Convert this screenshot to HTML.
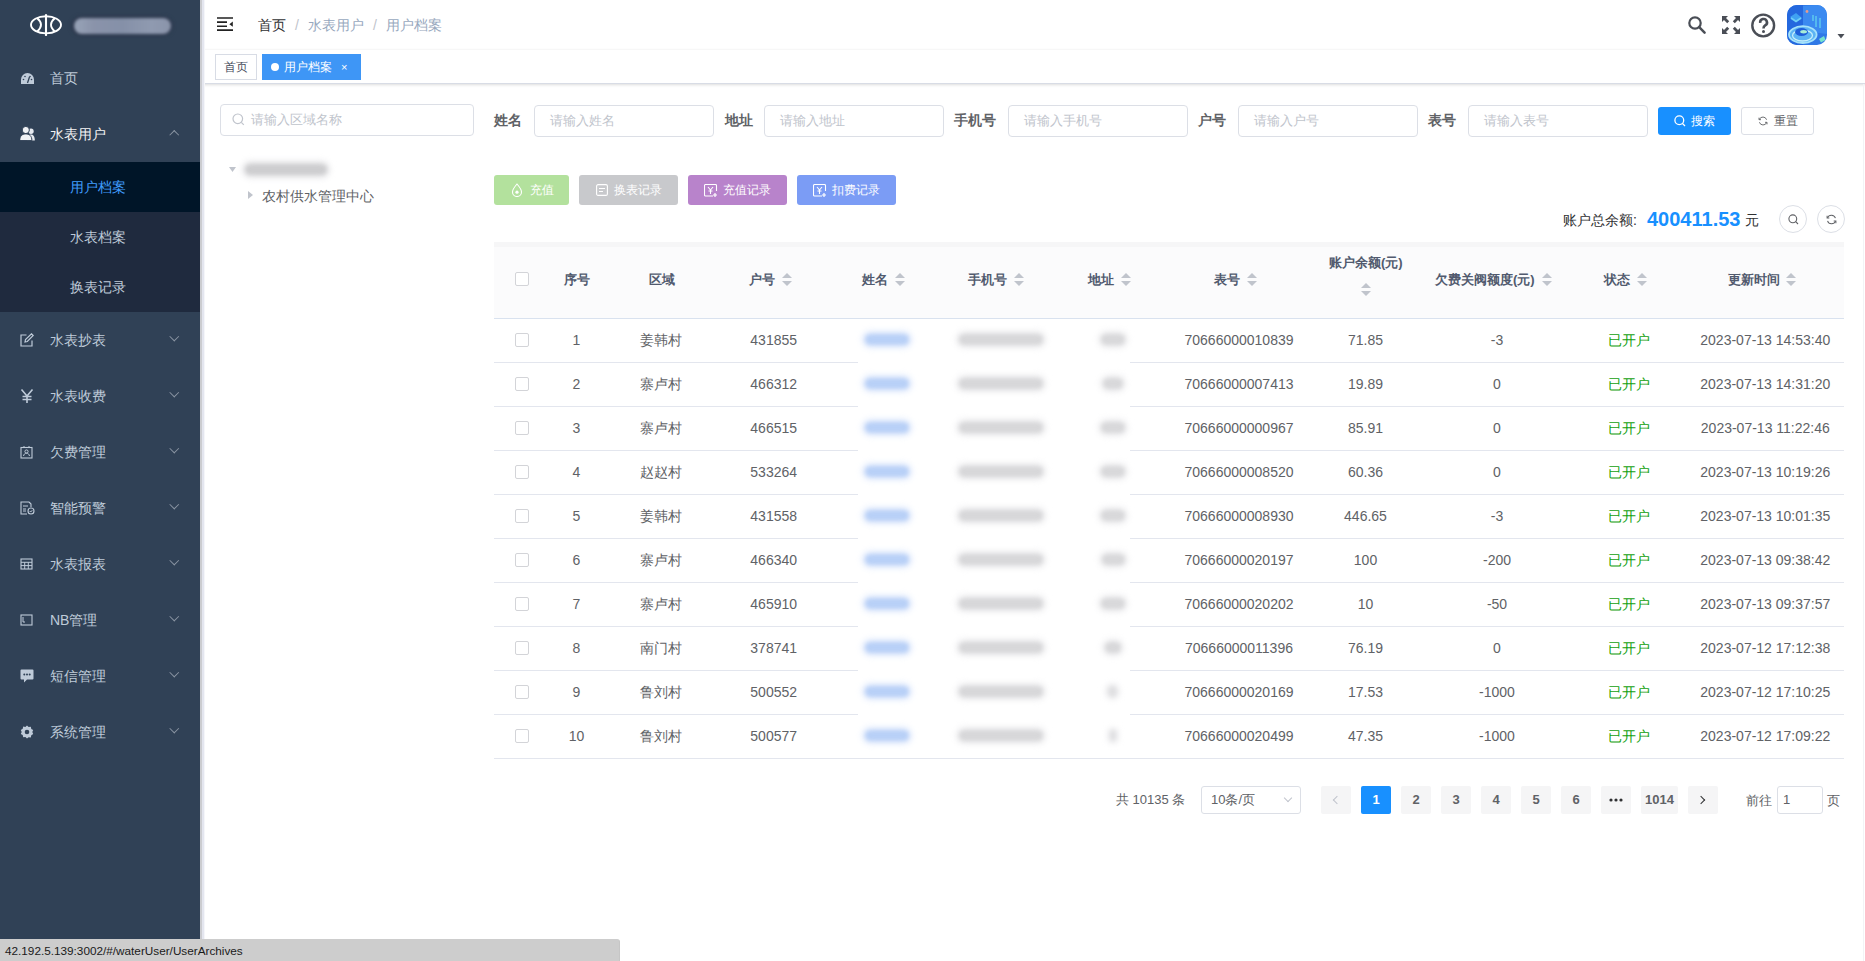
<!DOCTYPE html>
<html><head><meta charset="utf-8">
<style>
*{box-sizing:border-box;margin:0;padding:0}
html,body{width:1865px;height:961px;overflow:hidden;background:#fff;font-family:"Liberation Sans",sans-serif;color:#606266}
.a{position:absolute}
#side{position:absolute;left:0;top:0;width:200px;height:961px;background:#304156;z-index:5}
.mi{position:absolute;left:0;width:200px;height:56px;color:#bfcbd9;font-size:14px}
.mi svg{position:absolute;left:20px;top:21px}
.mi .t{position:absolute;left:50px;top:0;line-height:56px;white-space:nowrap}
.mi .ar{position:absolute;left:171px;top:21px;width:6.5px;height:6.5px;border-right:1px solid #8b95a3;border-bottom:1px solid #8b95a3;transform:rotate(45deg)}
.mi .ar.up{top:26px;transform:rotate(-135deg)}
.sub{position:absolute;left:0;width:200px;height:50px;background:#1f2a3e;color:#bfcbd9;font-size:14px;line-height:50px;padding-left:70px}
#nav{position:absolute;left:200px;top:0;width:1665px;height:50px;background:#fff;box-shadow:0 1px 4px rgba(0,21,41,.08)}
#tags{position:absolute;left:200px;top:50px;width:1665px;height:34px;background:#fff;border-bottom:1px solid #d8dce5;box-shadow:0 1px 3px 0 rgba(0,0,0,.12),0 0 3px 0 rgba(0,0,0,.04)}
.tag{position:absolute;top:4px;height:26px;line-height:24px;font-size:12px;border:1px solid #d8dce5;color:#495060;padding:0 8px;background:#fff;white-space:nowrap}
.inp{position:absolute;height:32px;border:1px solid #dcdfe6;border-radius:4px;background:#fff;font-size:13px;color:#c0c4cc;line-height:30px;padding-left:15px;white-space:nowrap}
.lbl{position:absolute;font-size:14px;font-weight:bold;color:#606266;line-height:32px;white-space:nowrap}
.btn{position:absolute;height:30px;border-radius:3px;font-size:12px;color:#fff;line-height:30px;white-space:nowrap}
.th{position:absolute;font-size:13px;font-weight:bold;color:#515a6e;white-space:nowrap;line-height:16px}
.row{position:absolute;left:494px;width:1350px;height:44px;border-bottom:1px solid #e3e6ee}
.c{position:absolute;top:0;line-height:43px;font-size:14px;color:#606266;text-align:center;white-space:nowrap}
.cb{position:absolute;width:14px;height:14px;border:1px solid #d3d4d8;border-radius:2px;background:#fff}
.sort{position:absolute;width:10px;height:14px}
.sort:before{content:"";position:absolute;left:0;top:0;border:5px solid transparent;border-bottom-color:#c0c4cc;border-top-width:0}
.sort:after{content:"";position:absolute;left:0;top:8px;border:5px solid transparent;border-top-color:#c0c4cc;border-bottom-width:0}
.pg{position:absolute;top:786px;height:28px;min-width:30px;background:#f5f5f6;border-radius:2px;font-size:13px;font-weight:bold;color:#606266;line-height:28px;text-align:center;padding:0 4px}
.blur{position:absolute;border-radius:8px;filter:blur(2px)}
</style></head><body>
<div id="side">
<svg class="a" style="left:25px;top:8px" width="45" height="34" viewBox="0 0 45 34"><ellipse cx="21" cy="16.8" rx="15" ry="8.6" fill="none" stroke="#fff" stroke-width="1.9"/><path d="M12 10 Q20 16.8 12 23.6" fill="none" stroke="#fff" stroke-width="1.9"/><path d="M30 10 Q22 16.8 30 23.6" fill="none" stroke="#fff" stroke-width="1.9"/><line x1="21" y1="6.2" x2="21" y2="27.9" stroke="#fff" stroke-width="2.1"/></svg>
<div class="blur" style="left:72px;top:17px;width:100px;height:18px;border-radius:9px;background:#2b3449;filter:blur(2px)"></div><div class="blur" style="left:74px;top:18px;width:97px;height:16px;border-radius:8px;background:linear-gradient(90deg,#98a4b8 0%,#8a93aa 20%,#8590a8 50%,#8f9ab0 80%,#8a94aa 100%);filter:blur(1.8px)"></div>
<div class="mi" style="top:50px"><svg width="15" height="14" viewBox="0 0 15 14" style="top:22px"><path d="M7.5 1A6.5 6.5 0 0 0 1 7.5V12h13V7.5A6.5 6.5 0 0 0 7.5 1z" fill="#bfcbd9"/><path d="M7.5 11L9.5 5" stroke="#304156" stroke-width="1.3"/><circle cx="3.5" cy="7.5" r=".8" fill="#304156"/><circle cx="5" cy="4.5" r=".8" fill="#304156"/><circle cx="10" cy="4.5" r=".8" fill="#304156"/><circle cx="11.5" cy="7.5" r=".8" fill="#304156"/></svg><span class="t">首页</span></div>
<div class="mi" style="top:106px;color:#f4f4f5"><svg width="15" height="15" viewBox="0 0 15 15" style="left:20px;top:20px"><circle cx="11" cy="5.3" r="2.7" fill="#e6eaf0"/><path d="M7 14.5C7 10.5 8.8 8.6 11 8.6s3.8 1.9 3.8 5.9z" fill="#e6eaf0"/><circle cx="5.8" cy="4" r="3.6" fill="#f0f2f5" stroke="#304156" stroke-width="1"/><path d="M-.3 14.6C-.3 10 2.2 7.9 5.8 7.9s6.1 2.1 6.1 6.7z" fill="#f0f2f5" stroke="#304156" stroke-width="1"/></svg><span class="t">水表用户</span><span class="ar up"></span></div>
<div class="sub" style="top:162px;background:#001528;color:#409eff">用户档案</div>
<div class="sub" style="top:212px">水表档案</div>
<div class="sub" style="top:262px">换表记录</div>
<div class="mi" style="top:312px"><svg width="14" height="14" viewBox="0 0 14 14" style="top:21px"><path d="M12 7.5V13H1V2h5.5" fill="none" stroke="#bfcbd9" stroke-width="1.2"/><path d="M5 9l.5-2.5L11.5.8 13.2 2.5 7.3 8.5z" fill="none" stroke="#bfcbd9" stroke-width="1.2"/></svg><span class="t">水表抄表</span><span class="ar"></span></div>
<div class="mi" style="top:368px"><svg width="14" height="14" viewBox="0 0 14 14" style="top:21px"><path d="M1.5 0.5L7 7L12.5 0.5M7 7V14M2.5 7.5H11.5M2.5 10.5H11.5" fill="none" stroke="#bfcbd9" stroke-width="1.6"/></svg><span class="t">水表收费</span><span class="ar"></span></div>
<div class="mi" style="top:424px"><svg width="13" height="13" viewBox="0 0 13 13" style="top:22px"><rect x="1" y="1.5" width="11" height="10.5" fill="none" stroke="#bfcbd9" stroke-width="1.1"/><circle cx="6.5" cy="5.5" r="1.6" fill="none" stroke="#bfcbd9" stroke-width="1"/><path d="M3.5 10c.5-2 1.5-2.8 3-2.8s2.5.8 3 2.8" fill="none" stroke="#bfcbd9" stroke-width="1"/><path d="M4 0v2M9 0v2" stroke="#bfcbd9"/></svg><span class="t">欠费管理</span><span class="ar"></span></div>
<div class="mi" style="top:480px"><svg width="15" height="14" viewBox="0 0 15 14" style="top:21px"><path d="M9 1H1v12h6M9 1l2 2v3" fill="none" stroke="#bfcbd9" stroke-width="1.1"/><path d="M3 5h5M3 8h3M3 10h3" stroke="#bfcbd9" stroke-width="1"/><circle cx="11" cy="10" r="3" fill="none" stroke="#bfcbd9" stroke-width="1.1"/><path d="M9.7 10l1 1 1.6-1.8" fill="none" stroke="#bfcbd9" stroke-width="1"/></svg><span class="t">智能预警</span><span class="ar"></span></div>
<div class="mi" style="top:536px"><svg width="13" height="12" viewBox="0 0 13 12" style="top:22px"><rect x="1" y="1" width="11" height="10" fill="none" stroke="#bfcbd9" stroke-width="1.1"/><path d="M1 4.3h11M1 7.6h11M4.7 4.3V11M8.3 4.3V11" stroke="#bfcbd9" stroke-width="1"/></svg><span class="t">水表报表</span><span class="ar"></span></div>
<div class="mi" style="top:592px"><svg width="13" height="12" viewBox="0 0 13 12" style="top:22px"><rect x="1" y="1" width="11" height="10" fill="none" stroke="#bfcbd9" stroke-width="1.1"/><path d="M3 3v5h2" fill="none" stroke="#bfcbd9" stroke-width="1"/></svg><span class="t">NB管理</span><span class="ar"></span></div>
<div class="mi" style="top:648px"><svg width="14" height="14" viewBox="0 0 14 14" style="top:21px"><path d="M1.5 0.5h11a1 1 0 0 1 1 1v8a1 1 0 0 1-1 1H7l-3 3v-3H1.5a1 1 0 0 1-1-1v-8a1 1 0 0 1 1-1z" fill="#bfcbd9"/><circle cx="4.3" cy="5.5" r="1" fill="#304156"/><circle cx="7" cy="5.5" r="1" fill="#304156"/><circle cx="9.7" cy="5.5" r="1" fill="#304156"/></svg><span class="t">短信管理</span><span class="ar"></span></div>
<div class="mi" style="top:704px"><svg width="14" height="14" viewBox="0 0 14 14" style="top:21px"><path d="M7 .5l1.6 1.5 2.2-.3.5 2.2 1.9 1.2-.9 2 .9 2-1.9 1.2-.5 2.2-2.2-.3L7 13.5l-1.6-1.5-2.2.3-.5-2.2L.8 9l.9-2-.9-2 1.9-1.2.5-2.2 2.2.3z" fill="#bfcbd9"/><circle cx="7" cy="7" r="2.3" fill="#304156"/></svg><span class="t">系统管理</span><span class="ar"></span></div>
</div>
<div class="a" style="left:200px;top:0;width:2px;height:961px;background:#cbccd0;z-index:6"></div><div class="a" style="left:202px;top:0;width:2px;height:961px;background:#e4e6ef;z-index:6"></div><div class="a" style="left:204px;top:0;width:1px;height:961px;background:#f5f6fa;z-index:6"></div>
<div id="nav">
<svg class="a" style="left:17px;top:17px" width="16" height="15" viewBox="0 0 16 15"><path d="M0 1h16M0 5.1h10M0 9.2h10M0 13.1h16" stroke="#222" stroke-width="1.6"/><path d="M15.8 4.5v5.3l-3.4-2.65z" fill="#222"/></svg>
<div class="a" style="left:58px;top:16px;font-size:14px;line-height:18px;white-space:nowrap"><span style="color:#303133">首页</span><span style="color:#c0c4cc;margin:0 9px">/</span><span style="color:#97a8be">水表用户</span><span style="color:#c0c4cc;margin:0 9px">/</span><span style="color:#97a8be">用户档案</span></div>
<svg class="a" style="left:1488px;top:16px" width="19" height="19" viewBox="0 0 19 19"><circle cx="7" cy="7" r="5.7" fill="none" stroke="#4a4e56" stroke-width="2.2"/><path d="M11.2 11.2L16.6 16.6" stroke="#4a4e56" stroke-width="2.5" stroke-linecap="round"/></svg>
<svg class="a" style="left:1522px;top:16px" width="18" height="18" viewBox="0 0 18 18"><g fill="#4a4e56"><path d="M0 0h6l-2 2 3.2 3.2-2 2L2 4 0 6z"/><path d="M18 0h-6l2 2-3.2 3.2 2 2L16 4l2 2z"/><path d="M0 18h6l-2-2 3.2-3.2-2-2L2 14l-2-2z"/><path d="M18 18h-6l2-2-3.2-3.2 2-2L16 14l2-2z"/></g></svg>
<svg class="a" style="left:1550px;top:13px" width="26" height="26" viewBox="0 0 26 26"><circle cx="13.2" cy="12.5" r="10.9" fill="none" stroke="#4a4e56" stroke-width="2.4"/><path d="M10.2 9.8A3.4 3.4 0 1 1 15.2 12.4C14 13.2 13.5 13.8 13.5 15.4" fill="none" stroke="#4a4e56" stroke-width="2.6"/><circle cx="13.5" cy="18.6" r="1.5" fill="#4a4e56"/></svg>
<svg class="a" style="left:1587px;top:5px" width="40" height="40" viewBox="0 0 40 40"><defs><clipPath id="avc"><rect width="40" height="40" rx="10"/></clipPath></defs><g clip-path="url(#avc)">
<rect width="40" height="40" fill="#2f78e6"/>
<path d="M0 0h16v40H0z" fill="#2468de"/>
<path d="M16 1l24-2v30L16 26z" fill="#3b8af0"/>
<path d="M3 12l6-4 6 5-6 4z" fill="#3fa2f2"/>
<path d="M4 13l5 3.5 5-3.5" stroke="#6fd0f6" stroke-width="1.8" fill="none"/>
<path d="M29 11v11M33 13v10M26 10v6" stroke="#63d3ee" stroke-width="1.3"/>
<circle cx="20" cy="6.5" r="1.4" fill="#e89a8a"/>
<ellipse cx="15.8" cy="29.6" rx="13.8" ry="8.4" fill="#5cb4f4" stroke="#a5e2fa" stroke-width="1.8"/>
<ellipse cx="15.5" cy="30.5" rx="10" ry="5.5" fill="none" stroke="#c6effb" stroke-width="1.3"/>
<ellipse cx="14.5" cy="27" rx="6.5" ry="4" fill="#1e5fd8"/>
<ellipse cx="16.6" cy="26.7" rx="3.4" ry="1.7" fill="#a6eed6"/>
<path d="M32 34l5-3 1.5 4-4.5 2.5z" fill="#74e2cc"/>
</g></svg>
<svg class="a" style="left:1637px;top:34px" width="8" height="5" viewBox="0 0 8 5"><path d="M.5 0h7L4 4.5z" fill="#4a4e56"/></svg>
</div>
<div id="tags">
<div class="tag" style="left:15px;top:4px;width:42px;padding:0;text-align:center">首页</div>
<div class="tag" style="left:62px;top:4px;width:99px;background:#3e96f6;border-color:#3e96f6;color:#fff;padding:0"><span class="a" style="left:8px;top:8px;width:8px;height:8px;border-radius:50%;background:#fff"></span><span class="a" style="left:21px;top:0">用户档案</span><span class="a" style="left:78px;top:0;font-size:11px">×</span></div>
</div>
<div id="content">
<div class="inp" style="left:220px;top:104px;width:254px;padding-left:30px"><svg class="a" style="left:11px;top:8px" width="13" height="13" viewBox="0 0 13 13"><circle cx="5.8" cy="5.8" r="4.8" fill="none" stroke="#c0c4cc" stroke-width="1.2"/><path d="M9.3 9.3l2.5 2.5" stroke="#c0c4cc" stroke-width="1.2"/></svg>请输入区域名称</div>
<svg class="a" style="left:229px;top:167px" width="7" height="5" viewBox="0 0 7 5"><path d="M0 0h7L3.5 5z" fill="#c0c4cc"/></svg>
<div class="blur" style="left:245px;top:164px;width:82px;height:11px;background:#cdcdcf;box-shadow:0 0 5px 3px #e6e6e8;filter:blur(2px)"></div>
<svg class="a" style="left:248px;top:191px" width="5" height="8" viewBox="0 0 5 8"><path d="M0 0v8l5-4z" fill="#c0c4cc"/></svg>
<div class="a" style="left:262px;top:187px;font-size:14px;line-height:18px;color:#606266;white-space:nowrap">农村供水管理中心</div>

<div class="lbl" style="left:494px;top:104px">姓名</div>
<div class="inp" style="left:534px;top:105px;width:180px">请输入姓名</div>
<div class="lbl" style="left:725px;top:104px">地址</div>
<div class="inp" style="left:764px;top:105px;width:180px">请输入地址</div>
<div class="lbl" style="left:954px;top:104px">手机号</div>
<div class="inp" style="left:1008px;top:105px;width:180px">请输入手机号</div>
<div class="lbl" style="left:1198px;top:104px">户号</div>
<div class="inp" style="left:1238px;top:105px;width:180px">请输入户号</div>
<div class="lbl" style="left:1428px;top:104px">表号</div>
<div class="inp" style="left:1468px;top:105px;width:180px">请输入表号</div>
<div class="btn" style="left:1658px;top:107px;width:73px;height:28px;line-height:28px;background:#1890ff;padding-left:33px"><svg class="a" style="left:16px;top:8px" width="12" height="12" viewBox="0 0 12 12"><circle cx="5.3" cy="5.3" r="4.4" fill="none" stroke="#fff" stroke-width="1.3"/><path d="M8.5 8.5l2.5 2.5" stroke="#fff" stroke-width="1.3"/></svg>搜索</div>
<div class="btn" style="left:1741px;top:107px;width:73px;height:28px;line-height:26px;background:#fff;border:1px solid #dcdfe6;color:#606266;padding-left:32px"><svg class="a" style="left:16px;top:8px" width="10" height="10" viewBox="0 0 12 12"><path d="M10.3 4.5A4.6 4.6 0 0 0 1.6 4.2M1.7 7.5a4.6 4.6 0 0 0 8.7.3" fill="none" stroke="#606266" stroke-width="1.1"/><path d="M1.2 2v2.4h2.4" fill="none" stroke="#606266" stroke-width="1.1"/><path d="M10.8 10v-2.4H8.4" fill="none" stroke="#606266" stroke-width="1.1"/></svg>重置</div>

<div class="btn" style="left:494px;top:175px;width:75px;background:#b3e19d;padding-left:36px"><svg class="a" style="left:17px;top:8px" width="12" height="14" viewBox="0 0 12 14"><path d="M6 1C3 4.5 1.5 6.8 1.5 9a4.5 4.5 0 0 0 9 0C10.5 6.8 9 4.5 6 1z" fill="none" stroke="#fff" stroke-width="1.1"/><circle cx="6" cy="9.2" r="1.6" fill="#fff"/></svg>充值</div>
<div class="btn" style="left:579px;top:175px;width:99px;background:#c8c9cc;padding-left:35px"><svg class="a" style="left:17px;top:9px" width="12" height="12" viewBox="0 0 12 12"><rect x=".6" y=".6" width="10.8" height="10.8" rx="1.5" fill="none" stroke="#fff" stroke-width="1.1"/><path d="M3 4.5h6M3 7.5h4" stroke="#fff" stroke-width="1.1"/></svg>换表记录</div>
<div class="btn" style="left:688px;top:175px;width:99px;background:#b883cb;padding-left:35px"><svg class="a" style="left:16px;top:9px" width="14" height="13" viewBox="0 0 14 13"><path d="M9 12H1.5a1 1 0 0 1-1-1V1.5a1 1 0 0 1 1-1h10a1 1 0 0 1 1 1V7" fill="none" stroke="#fff" stroke-width="1.1"/><path d="M4 3l2.5 3L9 3M6.5 6v4M4.5 7h4" stroke="#fff" stroke-width="1.1" fill="none"/><path d="M11 9v4M9 11h4" stroke="#fff" stroke-width="1.2"/></svg>充值记录</div>
<div class="btn" style="left:797px;top:175px;width:99px;background:#7b9cf5;padding-left:35px"><svg class="a" style="left:16px;top:9px" width="14" height="13" viewBox="0 0 14 13"><path d="M9 12H1.5a1 1 0 0 1-1-1V1.5a1 1 0 0 1 1-1h10a1 1 0 0 1 1 1V7" fill="none" stroke="#fff" stroke-width="1.1"/><path d="M4 3l2.5 3L9 3M6.5 6v4M4.5 7h4" stroke="#fff" stroke-width="1.1" fill="none"/><path d="M11 9v4M9 11h4" stroke="#fff" stroke-width="1.2"/></svg>扣费记录</div>

<div class="a" style="left:1563px;top:211px;font-size:14px;line-height:18px;color:#303133;white-space:nowrap">账户总余额:</div>
<div class="a" style="left:1647px;top:207px;font-size:20px;font-weight:bold;line-height:24px;color:#1890ff;white-space:nowrap">400411.53</div>
<div class="a" style="left:1745px;top:211px;font-size:14px;line-height:18px;color:#303133">元</div>
<div class="a" style="left:1779px;top:205px;width:28px;height:28px;border:1px solid #dcdfe6;border-radius:50%"><svg class="a" style="left:8px;top:8px" width="11" height="11" viewBox="0 0 11 11"><circle cx="4.8" cy="4.8" r="3.9" fill="none" stroke="#606266" stroke-width="1.1"/><path d="M7.7 7.7l2.3 2.3" stroke="#606266" stroke-width="1.1"/></svg></div>
<div class="a" style="left:1817px;top:205px;width:28px;height:28px;border:1px solid #dcdfe6;border-radius:50%"><svg class="a" style="left:8px;top:8px" width="11" height="11" viewBox="0 0 12 12"><path d="M10.3 4.5A4.6 4.6 0 0 0 1.6 4.2M1.7 7.5a4.6 4.6 0 0 0 8.7.3" fill="none" stroke="#606266" stroke-width="1.1"/><path d="M1.2 2v2.4h2.4" fill="none" stroke="#606266" stroke-width="1.1"/><path d="M10.8 10v-2.4H8.4" fill="none" stroke="#606266" stroke-width="1.1"/></svg></div>
</div>
<div id="table">
<div class="a" style="left:494px;top:242px;width:1350px;height:77px;background:#fbfbfc;border-top:5px solid #f6f6f7;border-bottom:1px solid #d9e2ef"></div>
<div class="cb" style="left:515px;top:272px"></div>
<div class="th" style="left:564px;top:272px">序号</div>
<div class="th" style="left:649px;top:272px">区域</div>
<div class="th" style="left:749px;top:272px">户号</div><span class="sort" style="left:782px;top:273px"></span>
<div class="th" style="left:862px;top:272px">姓名</div><span class="sort" style="left:895px;top:273px"></span>
<div class="th" style="left:968px;top:272px">手机号</div><span class="sort" style="left:1014px;top:273px"></span>
<div class="th" style="left:1088px;top:272px">地址</div><span class="sort" style="left:1121px;top:273px"></span>
<div class="th" style="left:1214px;top:272px">表号</div><span class="sort" style="left:1247px;top:273px"></span>
<div class="th" style="left:1329px;top:255px">账户余额(元)</div>
<span class="sort" style="left:1361px;top:283px"></span>
<div class="th" style="left:1435px;top:272px">欠费关阀额度(元)</div><span class="sort" style="left:1542px;top:273px"></span>
<div class="th" style="left:1604px;top:272px">状态</div><span class="sort" style="left:1637px;top:273px"></span>
<div class="th" style="left:1728px;top:272px">更新时间</div><span class="sort" style="left:1786px;top:273px"></span>
<div class="row" style="top:319px"><div class="cb" style="left:21px;top:14px"></div><div class="c" style="left:-17.5px;width:200px">1</div><div class="c" style="left:67px;width:200px">姜韩村</div><div class="c" style="left:179.70000000000005px;width:200px">431855</div><div class="c" style="left:645px;width:200px">70666000010839</div><div class="c" style="left:771.5px;width:200px">71.85</div><div class="c" style="left:903px;width:200px">-3</div><div class="c" style="left:1035px;width:200px;color:#13a10e">已开户</div><div class="c" style="left:1171.3px;width:200px">2023-07-13 14:53:40</div></div>
<div class="row" style="top:363px"><div class="cb" style="left:21px;top:14px"></div><div class="c" style="left:-17.5px;width:200px">2</div><div class="c" style="left:67px;width:200px">寨卢村</div><div class="c" style="left:179.70000000000005px;width:200px">466312</div><div class="c" style="left:645px;width:200px">70666000007413</div><div class="c" style="left:771.5px;width:200px">19.89</div><div class="c" style="left:903px;width:200px">0</div><div class="c" style="left:1035px;width:200px;color:#13a10e">已开户</div><div class="c" style="left:1171.3px;width:200px">2023-07-13 14:31:20</div></div>
<div class="row" style="top:407px"><div class="cb" style="left:21px;top:14px"></div><div class="c" style="left:-17.5px;width:200px">3</div><div class="c" style="left:67px;width:200px">寨卢村</div><div class="c" style="left:179.70000000000005px;width:200px">466515</div><div class="c" style="left:645px;width:200px">70666000000967</div><div class="c" style="left:771.5px;width:200px">85.91</div><div class="c" style="left:903px;width:200px">0</div><div class="c" style="left:1035px;width:200px;color:#13a10e">已开户</div><div class="c" style="left:1171.3px;width:200px">2023-07-13 11:22:46</div></div>
<div class="row" style="top:451px"><div class="cb" style="left:21px;top:14px"></div><div class="c" style="left:-17.5px;width:200px">4</div><div class="c" style="left:67px;width:200px">赵赵村</div><div class="c" style="left:179.70000000000005px;width:200px">533264</div><div class="c" style="left:645px;width:200px">70666000008520</div><div class="c" style="left:771.5px;width:200px">60.36</div><div class="c" style="left:903px;width:200px">0</div><div class="c" style="left:1035px;width:200px;color:#13a10e">已开户</div><div class="c" style="left:1171.3px;width:200px">2023-07-13 10:19:26</div></div>
<div class="row" style="top:495px"><div class="cb" style="left:21px;top:14px"></div><div class="c" style="left:-17.5px;width:200px">5</div><div class="c" style="left:67px;width:200px">姜韩村</div><div class="c" style="left:179.70000000000005px;width:200px">431558</div><div class="c" style="left:645px;width:200px">70666000008930</div><div class="c" style="left:771.5px;width:200px">446.65</div><div class="c" style="left:903px;width:200px">-3</div><div class="c" style="left:1035px;width:200px;color:#13a10e">已开户</div><div class="c" style="left:1171.3px;width:200px">2023-07-13 10:01:35</div></div>
<div class="row" style="top:539px"><div class="cb" style="left:21px;top:14px"></div><div class="c" style="left:-17.5px;width:200px">6</div><div class="c" style="left:67px;width:200px">寨卢村</div><div class="c" style="left:179.70000000000005px;width:200px">466340</div><div class="c" style="left:645px;width:200px">70666000020197</div><div class="c" style="left:771.5px;width:200px">100</div><div class="c" style="left:903px;width:200px">-200</div><div class="c" style="left:1035px;width:200px;color:#13a10e">已开户</div><div class="c" style="left:1171.3px;width:200px">2023-07-13 09:38:42</div></div>
<div class="row" style="top:583px"><div class="cb" style="left:21px;top:14px"></div><div class="c" style="left:-17.5px;width:200px">7</div><div class="c" style="left:67px;width:200px">寨卢村</div><div class="c" style="left:179.70000000000005px;width:200px">465910</div><div class="c" style="left:645px;width:200px">70666000020202</div><div class="c" style="left:771.5px;width:200px">10</div><div class="c" style="left:903px;width:200px">-50</div><div class="c" style="left:1035px;width:200px;color:#13a10e">已开户</div><div class="c" style="left:1171.3px;width:200px">2023-07-13 09:37:57</div></div>
<div class="row" style="top:627px"><div class="cb" style="left:21px;top:14px"></div><div class="c" style="left:-17.5px;width:200px">8</div><div class="c" style="left:67px;width:200px">南门村</div><div class="c" style="left:179.70000000000005px;width:200px">378741</div><div class="c" style="left:645px;width:200px">70666000011396</div><div class="c" style="left:771.5px;width:200px">76.19</div><div class="c" style="left:903px;width:200px">0</div><div class="c" style="left:1035px;width:200px;color:#13a10e">已开户</div><div class="c" style="left:1171.3px;width:200px">2023-07-12 17:12:38</div></div>
<div class="row" style="top:671px"><div class="cb" style="left:21px;top:14px"></div><div class="c" style="left:-17.5px;width:200px">9</div><div class="c" style="left:67px;width:200px">鲁刘村</div><div class="c" style="left:179.70000000000005px;width:200px">500552</div><div class="c" style="left:645px;width:200px">70666000020169</div><div class="c" style="left:771.5px;width:200px">17.53</div><div class="c" style="left:903px;width:200px">-1000</div><div class="c" style="left:1035px;width:200px;color:#13a10e">已开户</div><div class="c" style="left:1171.3px;width:200px">2023-07-12 17:10:25</div></div>
<div class="row" style="top:715px"><div class="cb" style="left:21px;top:14px"></div><div class="c" style="left:-17.5px;width:200px">10</div><div class="c" style="left:67px;width:200px">鲁刘村</div><div class="c" style="left:179.70000000000005px;width:200px">500577</div><div class="c" style="left:645px;width:200px">70666000020499</div><div class="c" style="left:771.5px;width:200px">47.35</div><div class="c" style="left:903px;width:200px">-1000</div><div class="c" style="left:1035px;width:200px;color:#13a10e">已开户</div><div class="c" style="left:1171.3px;width:200px">2023-07-12 17:09:22</div></div>
<div class="a" style="left:858px;top:320px;width:272px;height:437px;background:#fff"></div>
<div class="blur" style="left:865px;top:334px;width:44px;height:11px;background:#b8d0f7;box-shadow:0 0 5px 3px #dfe9fc"></div>
<div class="blur" style="left:959px;top:334px;width:84px;height:11px;background:#d7d7d9;box-shadow:0 0 5px 3px #ebebed"></div>
<div class="blur" style="left:1101px;top:334px;width:24px;height:11px;background:#d8d8da;box-shadow:0 0 5px 3px #ececee"></div>
<div class="blur" style="left:865px;top:378px;width:44px;height:11px;background:#b8d0f7;box-shadow:0 0 5px 3px #dfe9fc"></div>
<div class="blur" style="left:959px;top:378px;width:84px;height:11px;background:#d7d7d9;box-shadow:0 0 5px 3px #ebebed"></div>
<div class="blur" style="left:1103px;top:378px;width:20px;height:11px;background:#d8d8da;box-shadow:0 0 5px 3px #ececee"></div>
<div class="blur" style="left:865px;top:422px;width:44px;height:11px;background:#b8d0f7;box-shadow:0 0 5px 3px #dfe9fc"></div>
<div class="blur" style="left:959px;top:422px;width:84px;height:11px;background:#d7d7d9;box-shadow:0 0 5px 3px #ebebed"></div>
<div class="blur" style="left:1101px;top:422px;width:24px;height:11px;background:#d8d8da;box-shadow:0 0 5px 3px #ececee"></div>
<div class="blur" style="left:865px;top:466px;width:44px;height:11px;background:#b8d0f7;box-shadow:0 0 5px 3px #dfe9fc"></div>
<div class="blur" style="left:959px;top:466px;width:84px;height:11px;background:#d7d7d9;box-shadow:0 0 5px 3px #ebebed"></div>
<div class="blur" style="left:1101px;top:466px;width:24px;height:11px;background:#d8d8da;box-shadow:0 0 5px 3px #ececee"></div>
<div class="blur" style="left:865px;top:510px;width:44px;height:11px;background:#b8d0f7;box-shadow:0 0 5px 3px #dfe9fc"></div>
<div class="blur" style="left:959px;top:510px;width:84px;height:11px;background:#d7d7d9;box-shadow:0 0 5px 3px #ebebed"></div>
<div class="blur" style="left:1101px;top:510px;width:24px;height:11px;background:#d8d8da;box-shadow:0 0 5px 3px #ececee"></div>
<div class="blur" style="left:865px;top:554px;width:44px;height:11px;background:#b8d0f7;box-shadow:0 0 5px 3px #dfe9fc"></div>
<div class="blur" style="left:959px;top:554px;width:84px;height:11px;background:#d7d7d9;box-shadow:0 0 5px 3px #ebebed"></div>
<div class="blur" style="left:1102px;top:554px;width:23px;height:11px;background:#d8d8da;box-shadow:0 0 5px 3px #ececee"></div>
<div class="blur" style="left:865px;top:598px;width:44px;height:11px;background:#b8d0f7;box-shadow:0 0 5px 3px #dfe9fc"></div>
<div class="blur" style="left:959px;top:598px;width:84px;height:11px;background:#d7d7d9;box-shadow:0 0 5px 3px #ebebed"></div>
<div class="blur" style="left:1101px;top:598px;width:24px;height:11px;background:#d8d8da;box-shadow:0 0 5px 3px #ececee"></div>
<div class="blur" style="left:865px;top:642px;width:44px;height:11px;background:#b8d0f7;box-shadow:0 0 5px 3px #dfe9fc"></div>
<div class="blur" style="left:959px;top:642px;width:84px;height:11px;background:#d7d7d9;box-shadow:0 0 5px 3px #ebebed"></div>
<div class="blur" style="left:1105px;top:642px;width:16px;height:11px;background:#d8d8da;box-shadow:0 0 5px 3px #ececee"></div>
<div class="blur" style="left:865px;top:686px;width:44px;height:11px;background:#b8d0f7;box-shadow:0 0 5px 3px #dfe9fc"></div>
<div class="blur" style="left:959px;top:686px;width:84px;height:11px;background:#d7d7d9;box-shadow:0 0 5px 3px #ebebed"></div>
<div class="blur" style="left:1108px;top:686px;width:9px;height:11px;background:#e0e0e2;box-shadow:0 0 4px 3px #eeeef0"></div>
<div class="blur" style="left:865px;top:730px;width:44px;height:11px;background:#b8d0f7;box-shadow:0 0 5px 3px #dfe9fc"></div>
<div class="blur" style="left:959px;top:730px;width:84px;height:11px;background:#d7d7d9;box-shadow:0 0 5px 3px #ebebed"></div>
<div class="blur" style="left:1110px;top:730px;width:6px;height:11px;background:#e0e0e2;box-shadow:0 0 4px 3px #eeeef0"></div>
</div>
<div id="pager">
<div class="a" style="left:1116px;top:791px;font-size:13px;line-height:17px;color:#606266;white-space:nowrap">共 10135 条</div>
<div class="a" style="left:1201px;top:786px;width:100px;height:28px;border:1px solid #dcdfe6;border-radius:3px;font-size:13px;line-height:26px;color:#606266;padding-left:9px;white-space:nowrap">10条/页<span class="a" style="left:83px;top:8px;width:6px;height:6px;border-right:1px solid #c0c4cc;border-bottom:1px solid #c0c4cc;transform:rotate(45deg)"></span></div>
<div class="pg" style="left:1321px;width:30px"><span class="a" style="left:13px;top:11px;width:6px;height:6px;border-left:1.5px solid #c0c4cc;border-bottom:1.5px solid #c0c4cc;transform:rotate(45deg)"></span></div>
<div class="pg" style="left:1361px;width:30px;background:#1890ff;color:#fff">1</div>
<div class="pg" style="left:1401px;width:30px">2</div>
<div class="pg" style="left:1441px;width:30px">3</div>
<div class="pg" style="left:1481px;width:30px">4</div>
<div class="pg" style="left:1521px;width:30px">5</div>
<div class="pg" style="left:1561px;width:30px">6</div>
<div class="pg" style="left:1601px;width:30px"><svg class="a" style="left:8px;top:12px" width="14" height="4" viewBox="0 0 14 4"><circle cx="2" cy="2" r="1.6" fill="#303133"/><circle cx="7" cy="2" r="1.6" fill="#303133"/><circle cx="12" cy="2" r="1.6" fill="#303133"/></svg></div>
<div class="pg" style="left:1641px;width:37px">1014</div>
<div class="pg" style="left:1688px;width:30px"><span class="a" style="left:10px;top:11px;width:6px;height:6px;border-right:1.5px solid #303133;border-top:1.5px solid #303133;transform:rotate(45deg)"></span></div>
<div class="a" style="left:1746px;top:792px;font-size:13px;line-height:17px;color:#606266;white-space:nowrap">前往</div>
<div class="a" style="left:1777px;top:786px;width:46px;height:28px;border:1px solid #dcdfe6;border-radius:3px;font-size:13px;line-height:26px;color:#606266;padding-left:5px">1</div>
<div class="a" style="left:1827px;top:792px;font-size:13px;line-height:17px;color:#606266">页</div>
</div>
<div class="a" style="left:0;top:939px;width:620px;height:22px;background:#cdcdcd;border:1px solid #c6c6c6;border-left:0;border-bottom:0;border-top-color:#cdcdcd;border-top-right-radius:3px;font-size:11.75px;line-height:22px;color:#1a1a1a;padding-left:5px;z-index:10;white-space:nowrap">42.192.5.139:3002/#/waterUser/UserArchives</div>
<div class="a" style="left:1863px;top:84px;width:1px;height:877px;background:#f3f3f6"></div>
</body></html>
